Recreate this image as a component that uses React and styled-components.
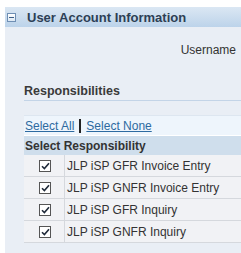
import React from "react";
import styled, { createGlobalStyle } from "styled-components";

const GlobalStyle = createGlobalStyle`
    body {
        margin: 0;
        background: #ffffff;
        font-family: 'Liberation Sans', Arial, sans-serif;
    }
`;

const responsibilities = [
    "JLP iSP GFR Invoice Entry",
    "JLP iSP GNFR Invoice Entry",
    "JLP iSP GFR Inquiry",
    "JLP iSP GNFR Inquiry",
];

export default function App(){
    return (
        <Page>
            <GlobalStyle />
            <Panel>
                <Header>
                    <Toggle />
                    <h2>User Account Information</h2>
                </Header>
                <Body>
                    <FieldRow>Username</FieldRow>
                    <SubTitle>Responsibilities</SubTitle>
                    <Section>
                        <LinkBar>
                            <Link>Select All</Link>
                            <Divider />
                            <Link>Select None</Link>
                        </LinkBar>
                        <Table>
                            <thead>
                                <tr>
                                    <th colSpan={2}>Select Responsibility</th>
                                </tr>
                            </thead>
                            <tbody>
                                {responsibilities.map((r) => (
                                    <tr key={r}>
                                        <CheckCell>
                                            <Check>
                                                <svg width="9" height="8" viewBox="0 0 9 8">
                                                    <path d="M1 4.2 L3.4 6.6 L8 1.2" fill="none" stroke="#1f2a3a" strokeWidth="1.6" />
                                                </svg>
                                            </Check>
                                        </CheckCell>
                                        <td>{r}</td>
                                    </tr>
                                ))}
                            </tbody>
                        </Table>
                    </Section>
                </Body>
            </Panel>
        </Page>
    );
}

const Page = styled.div`
    width: 241px;
    height: 253px;
    overflow: hidden;
    padding: 7px 0 0 5px;
    box-sizing: border-box;
`;

const Panel = styled.div`
    height: 100%;
    background: #e9eef5;
`;

const Header = styled.div`
    display: flex;
    align-items: center;
    height: 20px;
    padding-left: 2px;
    background: linear-gradient(#dbe7f3, #bcd3ea);

    h2{
        margin: 0 0 0 11px;
        font-size: 13px;
        font-weight: 700;
        color: #2d3f55;
    }
`;

const Toggle = styled.span`
    position: relative;
    width: 9px;
    height: 9px;
    box-sizing: border-box;
    border: 1px solid #6f8fb4;
    background: linear-gradient(#ffffff, #dce8f4);

    &::after{
        content: "";
        position: absolute;
        left: 1px;
        right: 1px;
        top: 3px;
        height: 1px;
        background: #3f5f86;
    }
`;

const Body = styled.div`
    padding: 0 0 0 19px;
`;

const FieldRow = styled.div`
    text-align: right;
    padding: 16px 5px 0 0;
    height: 13px;
    font-size: 12px;
    color: #333333;
`;

const SubTitle = styled.div`
    margin-top: 28px;
    padding-bottom: 2px;
    border-bottom: 1px solid #c3d4e7;
    font-size: 12.5px;
    font-weight: 700;
    color: #3a3a3a;
`;

const Section = styled.div`
    margin-top: 14px;
    background: #eef5fc;
    border-top: 1px solid #dde6f0;
`;

const LinkBar = styled.div`
    display: flex;
    align-items: center;
    gap: 5px;
    height: 19px;
    padding-left: 1px;
    font-size: 12px;
`;

const Link = styled.a`
    color: #2d6aa0;
    text-decoration: underline;
    cursor: pointer;
`;

const Divider = styled.span`
    width: 2px;
    height: 14px;
    background: #222222;
`;

const Table = styled.table`
    width: 100%;
    border-collapse: collapse;
    font-size: 12px;
    color: #333333;

    th{
        height: 19px;
        padding: 0 0 0 1px;
        text-align: left;
        font-weight: 700;
        background: #cfdeec;
        border-top: 1px solid #ffffff;
    }

    td{
        height: 21px;
        padding: 0 0 0 2px;
        background: #f1f2f5;
        border-bottom: 1px solid #d5d8dd;
    }
`;

const CheckCell = styled.td`
    width: 38px;
    text-align: center;
    border-right: 1px solid #d5d8dd;
`;

const Check = styled.span`
    display: inline-flex;
    align-items: center;
    justify-content: center;
    width: 12px;
    height: 12px;
    box-sizing: border-box;
    border: 1px solid #555555;
    background: #ffffff;
    vertical-align: middle;
`;
